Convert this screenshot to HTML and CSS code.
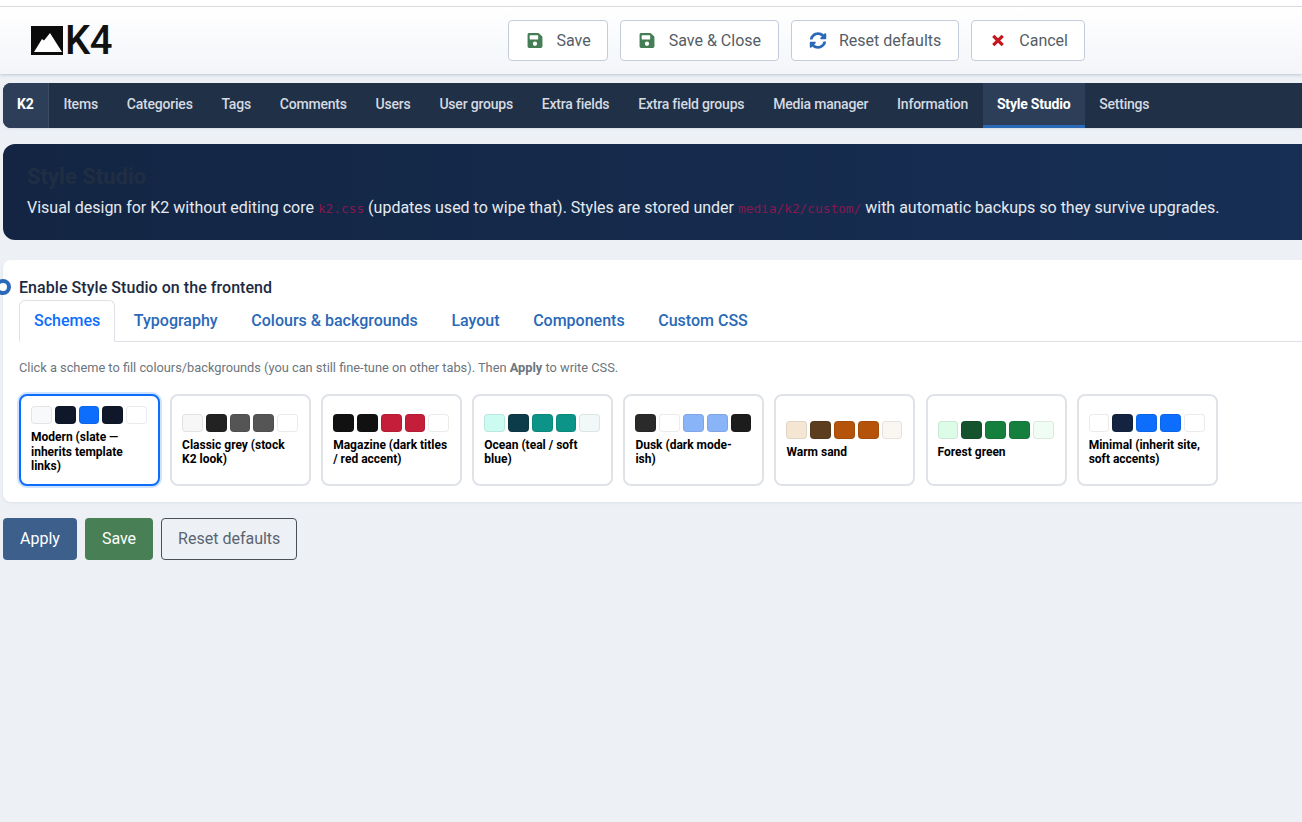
FILE: index.html
```html
<!DOCTYPE html>
<html lang="en">
<head>
<meta charset="UTF-8">
<meta name="viewport" content="width=device-width, initial-scale=1.0">
<title>Style Studio</title>
<link rel="stylesheet" href="styles.css">
</head>
<body>
<div class="top-strip"></div>
<header class="toolbar">
  <div class="logo">
    <svg class="logo-mark" viewBox="0 0 32 29" width="32" height="29"><rect width="32" height="29" fill="#0b0b0b"/><path d="M3 26 L11 13 L13 14.5 L19 7 L31 26 Z" fill="#fff"/></svg>
    <span class="logo-text">K4</span>
  </div>
  <div class="toolbar-actions">
    <button class="tool-btn"><svg class="ico ico-save" viewBox="0 0 448 512"><path d="M433.9 129.9l-83.8-83.8A48 48 0 0 0 316.1 32H48C21.5 32 0 53.5 0 80v352c0 26.5 21.5 48 48 48h352c26.5 0 48-21.5 48-48V163.9a48 48 0 0 0-14.1-34zM224 416c-35.3 0-64-28.7-64-64s28.7-64 64-64 64 28.7 64 64-28.7 64-64 64zm96-304.5V212c0 6.6-5.4 12-12 12H76c-6.6 0-12-5.4-12-12V108c0-6.6 5.4-12 12-12h228.5c3.2 0 6.2 1.3 8.5 3.5l3.5 3.5a12 12 0 0 1 3.5 8.5z"/></svg>Save</button>
    <button class="tool-btn"><svg class="ico ico-save" viewBox="0 0 448 512"><path d="M433.9 129.9l-83.8-83.8A48 48 0 0 0 316.1 32H48C21.5 32 0 53.5 0 80v352c0 26.5 21.5 48 48 48h352c26.5 0 48-21.5 48-48V163.9a48 48 0 0 0-14.1-34zM224 416c-35.3 0-64-28.7-64-64s28.7-64 64-64 64 28.7 64 64-28.7 64-64 64zm96-304.5V212c0 6.6-5.4 12-12 12H76c-6.6 0-12-5.4-12-12V108c0-6.6 5.4-12 12-12h228.5c3.2 0 6.2 1.3 8.5 3.5l3.5 3.5a12 12 0 0 1 3.5 8.5z"/></svg>Save &amp; Close</button>
    <button class="tool-btn"><svg class="ico ico-sync" viewBox="0 0 512 512"><path d="M370.7 133.3C339.5 104 298.9 88 255.8 88c-77.5.1-144.3 53.2-162.8 126.9-1.3 5.4-6.1 9.1-11.6 9.1H24.1c-7.5 0-13.2-6.8-11.8-14.2C33.9 94.9 134.8 8 256 8c66.4 0 126.8 26.1 171.3 68.7L463 41c15.1-15.1 41-4.4 41 16.9V192c0 13.3-10.7 24-24 24H345.9c-21.4 0-32.1-25.9-17-41l41.8-41.7zM32 296h134.1c21.4 0 32.1 25.9 17 41l-41.8 41.7c31.3 29.3 71.9 45.3 114.9 45.3 77.4-.1 144.3-53.1 162.8-126.8 1.3-5.4 6.1-9.2 11.6-9.2h57.3c7.5 0 13.2 6.8 11.8 14.2C478.1 417.1 377.2 504 256 504c-66.4 0-126.8-26.1-171.3-68.7L49 471c-15.1 15.1-41 4.4-41-16.9V320c0-13.3 10.7-24 24-24z"/></svg>Reset defaults</button>
    <button class="tool-btn"><svg class="ico ico-cancel" viewBox="0 0 18 18"><path d="M4 4 L14 14 M14 4 L4 14"/></svg>Cancel</button>
  </div>
</header>

<div class="content">
  <nav class="k2-nav">
    <a class="brand" href="#">K2</a>
    <a href="#">Items</a>
    <a href="#">Categories</a>
    <a href="#">Tags</a>
    <a href="#">Comments</a>
    <a href="#">Users</a>
    <a href="#">User groups</a>
    <a href="#">Extra fields</a>
    <a href="#">Extra field groups</a>
    <a href="#">Media manager</a>
    <a href="#">Information</a>
    <a class="active" href="#">Style Studio</a>
    <a href="#">Settings</a>
  </nav>

  <section class="banner">
    <h1>Style Studio</h1>
    <p>Visual design for K2 without editing core <code>k2.css</code> (updates used to wipe that). Styles are stored under <code>media/k2/custom/</code> with automatic backups so they survive upgrades.</p>
  </section>

  <section class="panel">
    <label class="enable-row"><span class="radio"></span>Enable Style Studio on the frontend</label>
    <ul class="tabs">
      <li class="active">Schemes</li>
      <li>Typography</li>
      <li>Colours &amp; backgrounds</li>
      <li>Layout</li>
      <li>Components</li>
      <li>Custom CSS</li>
    </ul>
    <p class="hint">Click a scheme to fill colours/backgrounds (you can still fine-tune on other tabs). Then <strong>Apply</strong> to write CSS.</p>
    <div class="schemes" id="schemes"></div>
  </section>

  <div class="actions">
    <button class="btn btn-apply">Apply</button>
    <button class="btn btn-save">Save</button>
    <button class="btn btn-reset">Reset defaults</button>
  </div>
</div>

<script>
  const schemes = [
    { name: 'Modern (slate — inherits template links)', colors: ['#f8f9fb', '#0f172a', '#0d6efd', '#0f172a', '#ffffff'], selected: true },
    { name: 'Classic grey (stock K2 look)', colors: ['#f7f7f7', '#222222', '#555555', '#555555', '#ffffff'] },
    { name: 'Magazine (dark titles / red accent)', colors: ['#111111', '#111111', '#c41e3a', '#c41e3a', '#ffffff'] },
    { name: 'Ocean (teal / soft blue)', colors: ['#ccfbf1', '#0c3b4a', '#0d9488', '#0d9488', '#f0f9f8'] },
    { name: 'Dusk (dark mode-ish)', colors: ['#2a2a2a', '#ffffff', '#8ab4f8', '#8ab4f8', '#1c1c1c'] },
    { name: 'Warm sand', colors: ['#f5e6d3', '#5c3d1e', '#b45309', '#b45309', '#faf7f2'] },
    { name: 'Forest green', colors: ['#dcfce7', '#14532d', '#15803d', '#15803d', '#f0fdf4'] },
    { name: 'Minimal (inherit site, soft accents)', colors: ['#ffffff', '#132340', '#0d6efd', '#0d6efd', '#ffffff'] }
  ];
  const wrap = document.getElementById('schemes');
  schemes.forEach(s => {
    const card = document.createElement('div');
    card.className = s.selected ? 'scheme selected' : 'scheme';
    const row = document.createElement('div');
    row.className = 'swatches';
    s.colors.forEach(c => {
      const sw = document.createElement('span');
      sw.style.backgroundColor = c;
      row.appendChild(sw);
    });
    const label = document.createElement('div');
    label.className = 'scheme-name';
    label.textContent = s.name;
    card.appendChild(row);
    card.appendChild(label);
    wrap.appendChild(card);
  });
</script>
</body>
</html>
```

FILE: styles.css
```css
* {
    box-sizing: border-box;
}
html, body {
    overflow-x: hidden;
}
body {
    margin: 0;
    min-height: 822px;
    background-color: #edf1f6;
    color: #212529;
    font-family: Roboto, "Liberation Sans", sans-serif;
    font-size: 16px;
}
.top-strip {
    height: 7px;
    background: #fff;
    border-bottom: 1px solid #e1e3e6;
}
.toolbar {
    display: flex;
    align-items: center;
    height: 67px;
    padding: 0 0 0 31px;
    background: linear-gradient(#ffffff, #f3f5f9);
    box-shadow: 0 1px 3px rgba(30, 50, 80, 0.22);
}
.logo {
    display: flex;
    align-items: center;
    gap: 2px;
    width: 477px;
}
.logo-mark {
    display: block;
}
.logo-text {
    font-size: 40px;
    font-weight: 500;
    letter-spacing: -0.5px;
    line-height: 29px;
    color: #111;
}
.toolbar-actions {
    display: flex;
    gap: 12px;
}
.tool-btn {
    display: flex;
    align-items: center;
    gap: 12.5px;
    height: 41px;
    padding: 0 16.5px 0 17px;
    background: #fff;
    border: 1px solid #c4ccdb;
    border-radius: 4px;
    color: #555d66;
    font-family: inherit;
    font-size: 16px;
}
.ico {
    display: block;
    width: 18px;
    height: 17px;
}
.ico-save {
    fill: #457d54;
}
.ico-sync {
    fill: #2a69b8;
}
.ico-cancel {
    fill: none;
    stroke: #c4161c;
    stroke-width: 3.4;
}

.content {
    margin-right: -20px;
    padding: 9px 0 0 3px;
}
.k2-nav {
    display: flex;
    height: 45px;
    background: #1f3047;
    border-radius: 8px;
    overflow: hidden;
    box-shadow: 0 1px 2px rgba(30, 50, 80, 0.1);
}
.k2-nav a {
    display: flex;
    align-items: center;
    padding: 0 14.4px 3px;
    color: #d5dae1;
    font-size: 14px;
    font-weight: 500;
    letter-spacing: -0.2px;
    text-decoration: none;
}
.k2-nav .brand {
    width: 46px;
    padding: 0 0 3px 14px;
    background: #2d3f58;
    border-right: 1px solid #3a4c66;
    color: #fff;
    font-weight: 700;
}
.k2-nav .active {
    background: #2d3f58;
    border-bottom: 3px solid #2a69b8;
    color: #fff;
    font-weight: 700;
    padding-bottom: 0;
}

.banner {
    height: 96px;
    margin-top: 16px;
    padding: 19px 24px 0;
    background: linear-gradient(90deg, #132543, #172f55);
    border-radius: 12px;
}
.banner h1 {
    margin: 0 0 6px;
    color: #1f2e43;
    font-size: 22px;
    font-weight: 700;
    line-height: 27px;
}
.banner p {
    margin: 0;
    color: #e6eaf0;
    font-size: 16px;
    line-height: 24px;
}
.banner code {
    color: #84194f;
    font-family: "DejaVu Sans Mono", "Liberation Mono", monospace;
    font-size: 12.8px;
}

.panel {
    height: 242px;
    margin-top: 20px;
    padding: 15px 16px 16px;
    background: #fff;
    border-radius: 8px;
    box-shadow: 0 1px 3px rgba(30, 50, 80, 0.08);
}
.enable-row {
    display: flex;
    align-items: center;
    gap: 8px;
    margin: 0 0 1px -24px;
    height: 24px;
    color: #1c2b41;
    font-weight: 500;
    letter-spacing: 0.05px;
}
.radio {
    width: 16px;
    height: 16px;
    background: #fff;
    border: 4px solid #2a69b8;
    border-radius: 50%;
}
.tabs {
    display: flex;
    gap: 3.6px;
    margin: 0;
    padding: 0;
    list-style: none;
    border-bottom: 1px solid #dee2e6;
}
.tabs li {
    height: 42px;
    margin-bottom: -1px;
    padding: 10px 14px 0;
    border: 1px solid transparent;
    border-radius: 6px 6px 0 0;
    color: #2a69b8;
    font-weight: 500;
}
.tabs .active {
    background: #fff;
    border-color: #dee2e6 #dee2e6 #fff;
    color: #0d6efd;
}
.hint {
    margin: 18px 0 18px;
    color: #6c757d;
    font-size: 12.8px;
    line-height: 16px;
}
.schemes {
    display: flex;
    gap: 10.1px;
}
.scheme {
    display: flex;
    flex-direction: column;
    justify-content: center;
    width: 141px;
    height: 92px;
    padding: 0 11px 0 10px;
    background: #fff;
    border: 2px solid #dfe3e8;
    border-radius: 8px;
}
.scheme.selected {
    border-color: #0d6efd;
    box-shadow: 0 0 0 2px rgba(13, 110, 253, 0.2);
}
.swatches {
    display: flex;
    gap: 3px;
    margin-bottom: 6px;
}
.swatches span {
    flex: 1;
    height: 18px;
    border: 1px solid rgba(0, 0, 0, 0.08);
    border-radius: 4px;
}
.scheme-name {
    color: #000;
    font-size: 12px;
    font-weight: 700;
    line-height: 14.4px;
}

.actions {
    display: flex;
    gap: 8px;
    margin-top: 16px;
}
.btn {
    height: 42px;
    padding: 0 16px 2px;
    border: 1px solid transparent;
    border-radius: 4px;
    font-family: inherit;
    font-size: 16px;
}
.btn-apply {
    background: #3d5f8c;
    color: #fff;
}
.btn-save {
    background: #487f55;
    color: #fff;
}
.btn-reset {
    background: transparent;
    border-color: #4a5058;
    color: #5a6470;
}
```
